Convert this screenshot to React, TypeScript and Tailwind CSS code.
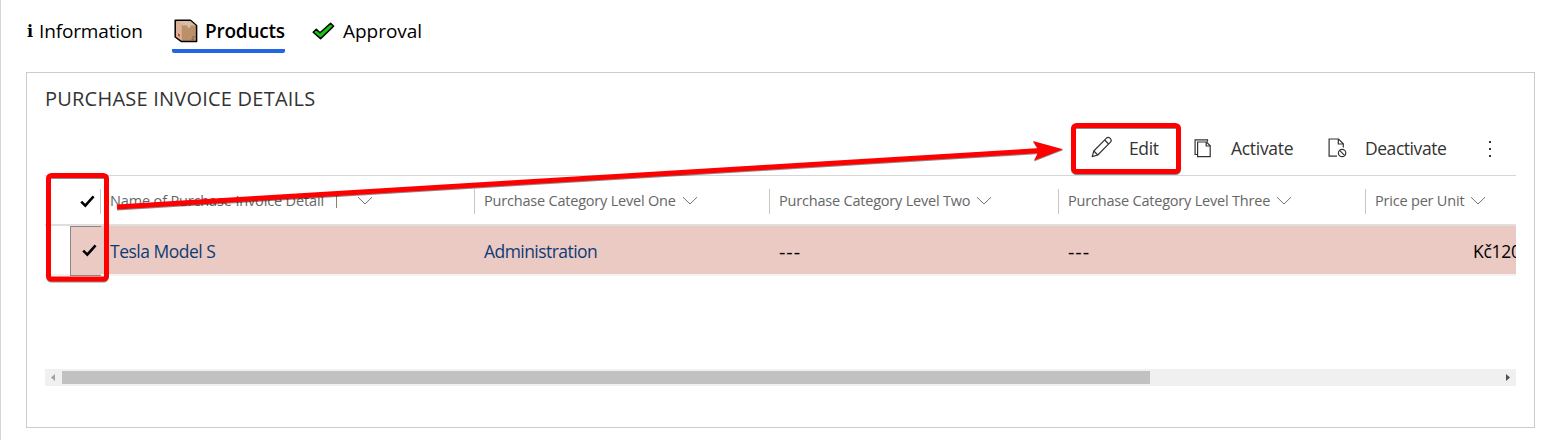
import React from "react";

function Chevron({ className = "" }: { className?: string }) {
  return (
    <svg className={"shrink-0 " + className} width="16" height="10" viewBox="0 0 16 10" fill="none" stroke="#737373" strokeWidth="1">
      <path d="M1 1.2 8 8l7-6.8" />
    </svg>
  );
}

function Check() {
  return (
    <svg className="shrink-0" width="15" height="13" viewBox="0 0 15 13" fill="none" stroke="#000" strokeWidth="2.6">
      <path d="M1.2 6.6 5.3 10.6 13.6 1.4" />
    </svg>
  );
}

function BoxIcon() {
  return (
    <svg className="shrink-0" width="24" height="24" viewBox="0 0 24 24">
      <path d="M1.2 1.2H16.5L22.6 6.5V22.6H7.5L1.2 18Z" fill="#bb9068" stroke="#000" strokeWidth="1.5" strokeLinejoin="round" />
      <path d="M2 2H16.2L21.6 6.6H7.8Z" fill="#dcb79b" />
      <path d="M2 2.4 7.8 6.6V21.6L2 17.5Z" fill="#d9b498" />
      <path d="M9 2h2.4l4.8 4.6v2.2h-2.6V6.6Z" fill="#c3c6c2" />
      <path d="M4 14.4l1.8 1.2v2.2l-1.8-1.2Z" fill="#e8202a" />
      <path d="M18 18h3M17.5 20.3h2.5" stroke="#705a4a" strokeWidth="1" />
    </svg>
  );
}

function GreenCheck() {
  return (
    <svg className="shrink-0" width="23" height="18" viewBox="0 0 23 18">
      <path d="M1.2 10.2 4.3 7.2 8 10.8 18.6 1.3 21.6 4.2 8.6 16.6Z" fill="#16c60c" stroke="#000" strokeWidth="1.5" strokeLinejoin="round" />
    </svg>
  );
}

function Pencil() {
  return (
    <svg className="shrink-0" width="22" height="22" viewBox="0 0 22 22" fill="none" stroke="#333" strokeWidth="1.2" strokeLinejoin="round">
      <path d="M1.2 20.6 2.8 15 15.2 2.4a2.8 2.8 0 0 1 4 4L6.8 19Z" />
      <path d="M2.8 15l4 4M13.6 4l4 4" />
    </svg>
  );
}

function ActivateIcon() {
  return (
    <svg className="shrink-0" width="18" height="19" viewBox="0 0 18 19" fill="none" stroke="#333" strokeWidth="1.2">
      <path d="M3.5 15.5H1.1V.9H13.5V2.8" />
      <path d="M3.6 3H12.5L16.2 6.8V17.6H3.6ZM12.2 3V7H16.2" />
    </svg>
  );
}

function DeactivateIcon() {
  return (
    <svg className="shrink-0" width="19" height="20" viewBox="0 0 19 20" fill="none" stroke="#333" strokeWidth="1.2">
      <path d="M9 18.2H1.1V1H10.5L15.3 5.8V9.5M10.3 1V6H15.3" />
      <circle cx="14.1" cy="15" r="3.7" />
      <path d="M11.6 12.4l5 5" />
    </svg>
  );
}

const headers = [
  { label: "Purchase Category Level One", width: "w-[295px]" },
  { label: "Purchase Category Level Two", width: "w-[289px]" },
  { label: "Purchase Category Level Three", width: "w-[307px]" },
  { label: "Price per Unit", width: "w-[151px]" },
];

export default function App() {
  return (
    <div className="relative h-[440px] w-[1559px] overflow-hidden border-l border-[#d6d6d6] bg-white font-['Open_Sans','Noto_Sans',sans-serif] text-black">
      <nav className="flex h-[72px] items-start pt-[10px] pl-[26px] text-[19px] leading-[42px] whitespace-nowrap">
        <div className="flex w-[145px]">
          <span className="w-[12px] pt-[1px] font-['DejaVu_Serif',serif] text-[16px] font-bold">i</span>
          <span className="tracking-[-0.15px]">Information</span>
        </div>
        <div className="flex h-[43px] w-[113px] items-center rounded-b-[2px] border-b-4 border-[#2266e3] pt-[3px]">
          <div className="flex w-[33px] pb-[1px] pl-[2px]"><BoxIcon /></div>
          <span className="font-semibold tracking-[-0.22px]">Products</span>
        </div>
        <div className="ml-[27px] flex h-[42px] items-center">
          <div className="w-[31px]"><GreenCheck /></div>
          <span className="tracking-[-0.02px]">Approval</span>
        </div>
      </nav>

      <section className="ml-[25px] h-[356px] w-[1509px] border border-[#cccccc] px-[18px]">
        <h2 className="h-[48px] pt-[11px] text-[20px] leading-[30px] tracking-[0.22px] text-[#333]">PURCHASE INVOICE DETAILS</h2>
        <div className="flex h-[54px] items-center pt-[1px] text-[17.5px] text-[#333]">
          <div className="box-content flex w-[103px] items-center pl-[1046px]">
            <div className="w-[38px] pb-[3px]"><Pencil /></div>
            <span className="pb-[1px] tracking-[-0.4px]">Edit</span>
          </div>
          <div className="flex w-[134px] items-center">
            <div className="w-[37px] pb-[1px]"><ActivateIcon /></div>
            <span className="tracking-[-0.3px]">Activate</span>
          </div>
          <div className="flex w-[160px] items-center">
            <div className="w-[37px] pb-[1px]"><DeactivateIcon /></div>
            <span className="tracking-[-0.45px]">Deactivate</span>
          </div>
          <svg width="4" height="18" viewBox="0 0 4 18" fill="#333">
            <rect x="1" y="1" width="2" height="2" /><rect x="1" y="8" width="2" height="2" /><rect x="1" y="15" width="2" height="2" />
          </svg>
        </div>

        <div className="w-[1471px] overflow-hidden border-t border-[#d6d6d6]">
          <div className="flex h-[50px] items-center border-b-2 border-[#e1dfdd] pt-[2px] text-[14.5px] text-[#666]">
            <div className="flex h-[25px] w-[56px] shrink-0 items-center border-r border-[#c8c6c4] pl-[35px]"><Check /></div>
            <div className="flex w-[373px] shrink-0 items-center pl-[9px]">
              <span className="tracking-[-0.15px]">Name of Purchase Invoice Detail</span>
              <svg className="ml-[8px]" width="9" height="14" viewBox="0 0 9 14" fill="none" stroke="#a07a60"><path d="M4.5 14V1M2.5 2 4.5 .7 6.5 2" /></svg>
              <Chevron className="ml-[16px]" />
            </div>
            {headers.map((h) => (
              <div key={h.label} className={"flex h-[25px] shrink-0 items-center border-l border-[#c8c6c4] pl-[9px] " + h.width}>
                <span className="tracking-[-0.2px]">{h.label}</span>
                <Chevron className="ml-[6px]" />
              </div>
            ))}
          </div>
          <div className="flex h-[50px] border-b-2 border-[#f3f2f1] pl-[25px] text-[17.5px] whitespace-nowrap">
            <div className="flex h-[50px] w-[31px] shrink-0 items-center border-y border-l border-[#8a8886] bg-[#ebcac4] pb-[2px] pl-[11px]"><Check /></div>
            <div className="flex h-[48px] grow items-center bg-[#ebcac4] pt-[3px] pl-[9px]">
              <span className="w-[374px] shrink-0 tracking-[-0.5px] text-[#0f3b75]">Tesla Model S</span>
              <span className="w-[295px] shrink-0 tracking-[-0.55px] text-[#0f3b75]">Administration</span>
              <span className="w-[289px] shrink-0 text-[20px] tracking-[0.9px]">---</span>
              <span className="w-[405px] shrink-0 text-[20px] tracking-[0.9px]">---</span>
              <span className="w-[43px] shrink-0 overflow-hidden tracking-[-0.3px]">Kč120</span>
            </div>
          </div>
        </div>

        <div className="mt-[93px] flex h-[17px] w-[1471px] items-center bg-[#f0f0f0]">
          <svg className="shrink-0" width="17" height="17" fill="#a3a3a3"><path d="M6 8.5 10 5v7Z" /></svg>
          <div className="h-[13px] w-[1088px] bg-[#c1c1c1]" />
          <svg className="ml-auto" width="17" height="17" fill="#505050"><path d="M11 8.5 7 5v7Z" /></svg>
        </div>
      </section>

      <svg className="pointer-events-none absolute top-0 left-[-1px] drop-shadow-[0.5px_1px_0.5px_rgba(0,0,0,0.45)]" width="1559" height="440" fill="none" stroke="#f00">
        <rect x="48.5" y="175.5" width="58" height="103.5" rx="3" strokeWidth="5" />
        <rect x="1073.5" y="125.5" width="105" height="46" rx="3" strokeWidth="5" />
        <path d="M117 207 1040 150.5" strokeWidth="5" />
        <path d="M1063 149.2 1034 160.5 1039 150.5 1033 141Z" fill="#f00" stroke="none" />
      </svg>
    </div>
  );
}
